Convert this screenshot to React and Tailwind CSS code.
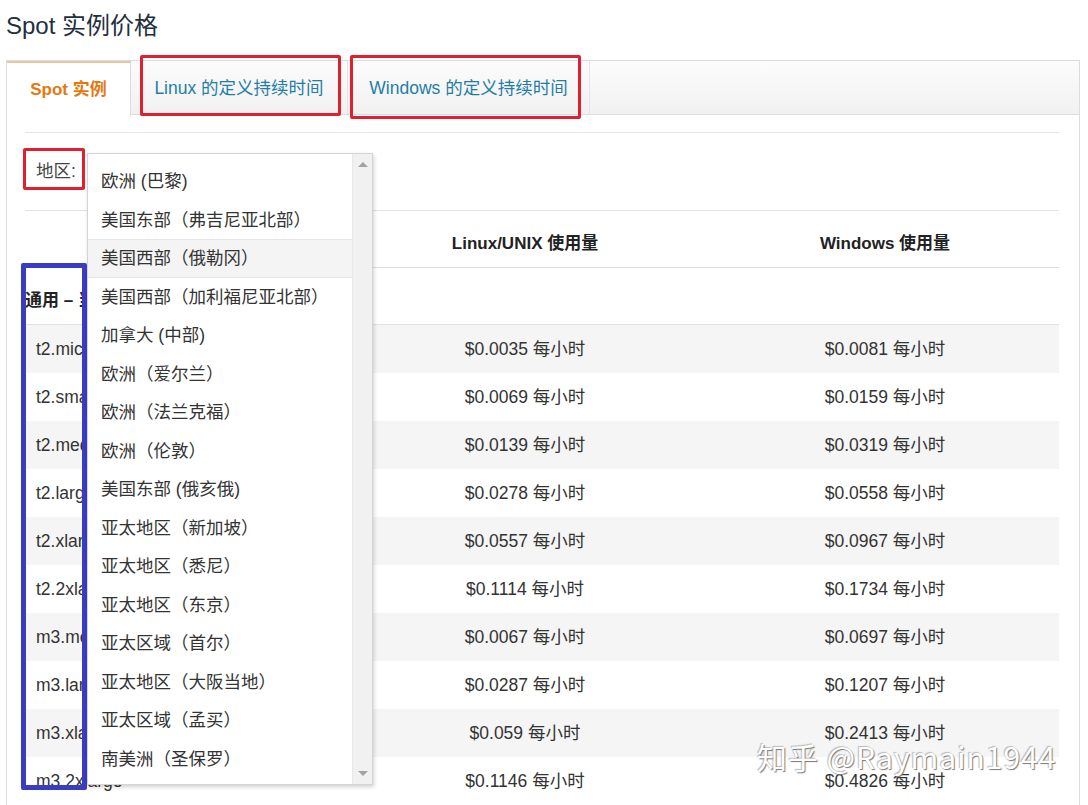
import React from "react";

const regions = [
    "欧洲 (巴黎)",
    "美国东部（弗吉尼亚北部）",
    "美国西部（俄勒冈）",
    "美国西部（加利福尼亚北部）",
    "加拿大 (中部)",
    "欧洲（爱尔兰）",
    "欧洲（法兰克福）",
    "欧洲（伦敦）",
    "美国东部 (俄亥俄)",
    "亚太地区（新加坡）",
    "亚太地区（悉尼）",
    "亚太地区（东京）",
    "亚太区域（首尔）",
    "亚太地区（大阪当地）",
    "亚太区域（孟买）",
    "南美洲（圣保罗）",
];

const rows = [
    ["t2.micro", "0.0035", "0.0081"],
    ["t2.small", "0.0069", "0.0159"],
    ["t2.medium", "0.0139", "0.0319"],
    ["t2.large", "0.0278", "0.0558"],
    ["t2.xlarge", "0.0557", "0.0967"],
    ["t2.2xlarge", "0.1114", "0.1734"],
    ["m3.medium", "0.0067", "0.0697"],
    ["m3.large", "0.0287", "0.1207"],
    ["m3.xlarge", "0.059", "0.2413"],
    ["m3.2xlarge", "0.1146", "0.4826"],
];

function RegionDropdown() {
    return (
        <div className="absolute left-[87px] top-[153px] w-[286px] h-[632px] flex bg-white border border-[#d4d4d4] shadow-[1px_2px_4px_rgba(0,0,0,0.18)]">
            <ul className="flex-1 pt-[8px]">
                {regions.map((name, i) => (
                    <li
                        key={name}
                        className={
                            i === 2
                                ? "h-[38.5px] pl-[13px] flex items-center text-[17.5px] text-[#333] bg-[#f4f4f4] border-y border-[#e6e6e6]"
                                : "h-[38.5px] pl-[13px] flex items-center text-[17.5px] text-[#333]"
                        }
                    >
                        {name}
                    </li>
                ))}
            </ul>
            <div className="w-[20px] bg-[#f1f1f1] border-l border-[#e8e8e8] flex flex-col items-center justify-between py-[8px]">
                <span className="w-0 h-0 border-x-[5px] border-x-transparent border-b-[5px] border-b-[#a3a3a3]" />
                <span className="w-0 h-0 border-x-[5px] border-x-transparent border-t-[5px] border-t-[#a3a3a3]" />
            </div>
        </div>
    );
}

export default function App() {
    return (
        <div className="relative w-[1088px] h-[805px] overflow-hidden bg-white text-[#333] font-['Liberation_Sans','Noto_Sans_CJK_SC',sans-serif]">
            <h1 className="pl-[6px] pt-[8px] h-[48px] text-[24px] leading-[36px] text-[#232f3e]">Spot 实例价格</h1>

            <div className="mt-[12px] ml-[6px] mr-[8px] border-x border-t border-[#dcdcdc]">
                {/* tabs */}
                <div className="h-[54px] flex bg-gradient-to-b from-[#fcfcfc] to-[#f1f1f1] border-b border-[#dcdcdc]">
                    <div className="w-[124px] h-[55px] -mb-px flex items-center justify-center bg-white border-t-2 border-t-[#e8c7a0] border-r border-r-[#dcdcdc] text-[17px] font-bold text-[#e47911]">
                        Spot 实例
                    </div>
                    <div className="w-[217px] pt-[2px] flex items-center justify-center text-[17.5px] text-[#1f7ea8] border-r border-[#e4e4e4]">
                        Linux 的定义持续时间
                    </div>
                    <div className="w-[242px] pt-[2px] flex items-center justify-center text-[17.5px] text-[#1f7ea8] border-r border-[#e4e4e4]">
                        Windows 的定义持续时间
                    </div>
                </div>

                {/* content */}
                <div className="pl-[18px] pr-[20px] pt-[17px]">
                    <div className="h-[78px] border-t border-[#e3e3e3] flex items-center pl-[11px]">
                        <span className="text-[17.5px] text-[#444]">地区:</span>
                    </div>

                    <div className="border-t border-[#e3e3e3]">
                        <div className="grid grid-cols-[320px_360px_1fr] h-[57px] pt-[9px] items-center border-b border-[#e0e0e0] text-[17px] font-bold text-[#222]">
                            <div />
                            <div className="text-center">Linux/UNIX 使用量</div>
                            <div className="text-center pl-[6px]">Windows 使用量</div>
                        </div>
                        <div className="h-[57px] pt-[9px] flex items-center border-b border-[#e0e0e0] text-[17px] font-bold text-[#222]">
                            通用 – 当前一代
                        </div>
                        {rows.map(([type, linux, win], i) => (
                            <div
                                key={type}
                                className={
                                    i % 2 === 0
                                        ? "grid grid-cols-[320px_360px_1fr] h-[48px] items-center bg-[#f5f5f5] text-[17.5px]"
                                        : "grid grid-cols-[320px_360px_1fr] h-[48px] items-center bg-white text-[17.5px]"
                                }
                            >
                                <div className="pl-[11px]">{type}</div>
                                <div className="text-center">${linux} 每小时</div>
                                <div className="text-center pl-[6px]">${win} 每小时</div>
                            </div>
                        ))}
                    </div>
                </div>
            </div>

            {/* annotations */}
            <div className="absolute left-[21px] top-[263px] w-[66px] h-[527px] border-[5px] border-[#3a3dc2] rounded-[2px]" />
            <RegionDropdown />
            <div className="absolute left-[140px] top-[55px] w-[201px] h-[61px] border-[3px] border-[#e0202e] rounded-[2px]" />
            <div className="absolute left-[350px] top-[55px] w-[231px] h-[64px] border-[3px] border-[#e0202e] rounded-[2px]" />
            <div className="absolute left-[23px] top-[148px] w-[62px] h-[42px] border-[3px] border-[#e0202e] rounded-[2px]" />

            {/* watermark */}
            <div className="absolute left-[757px] top-[736px] text-[30px] leading-[40px] tracking-[1px] text-white font-['Noto_Sans_CJK_SC',sans-serif] [text-shadow:1px_1px_1px_#777,-1px_-1px_1px_#bbb]">
                知乎 @Raymain1944
            </div>
        </div>
    );
}
